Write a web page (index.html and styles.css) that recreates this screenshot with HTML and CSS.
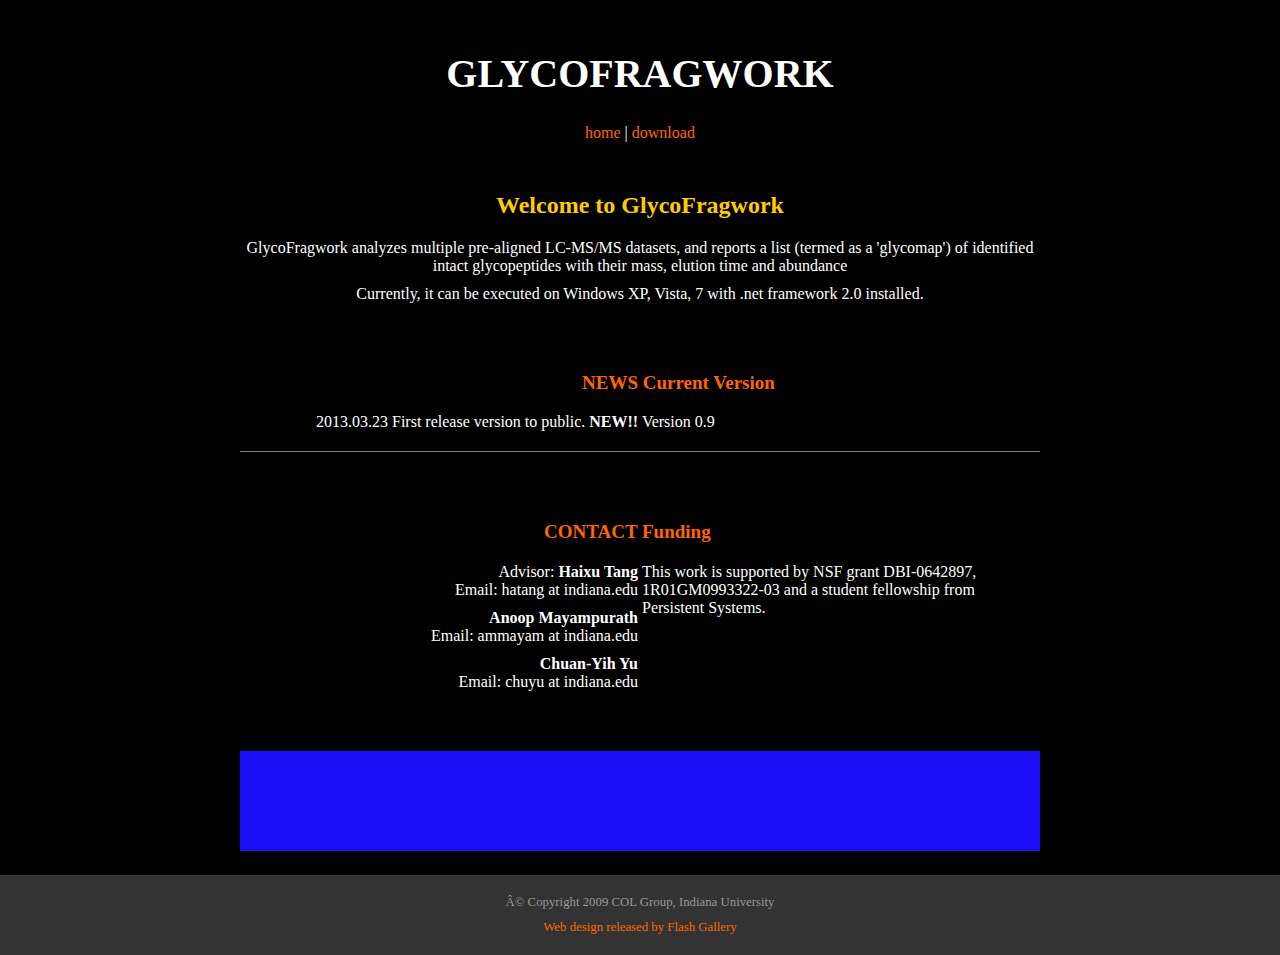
FILE: index.html
```html
<!DOCTYPE html>
<html>
<head>
<meta charset="utf-8">
<title>GlycoFragwork</title>
<link rel="stylesheet" href="styles.css">
</head>
<body>
<div class="wrap">
  <header class="header">
    <h1 class="logo">GLYCOFRAGWORK</h1>
    <nav class="nav"><a href="#">home</a> | <a href="#">download</a></nav>
  </header>

  <section class="welcome">
    <h2 class="welcome-title">Welcome to GlycoFragwork</h2>
    <p class="intro">GlycoFragwork analyzes multiple pre-aligned LC-MS/MS datasets, and reports a list (termed as a 'glycomap') of identified intact glycopeptides with their mass, elution time and abundance</p>
    <p class="intro intro-2">Currently, it can be executed on Windows XP, Vista, 7 with .net framework 2.0 installed.</p>
  </section>

  <section class="news">
    <h3 class="section-title news-title">NEWS Current Version</h3>
    <p class="news-line">2013.03.23 First release version to public. <b>NEW!!</b> Version 0.9</p>
  </section>

  <hr class="rule">

  <section class="contact">
    <h3 class="section-title contact-title">CONTACT Funding</h3>
    <div class="contact-row">
      <div class="people">
        <p class="person">Advisor: <b>Haixu Tang</b><br>Email: hatang at indiana.edu</p>
        <p class="person"><b>Anoop Mayampurath</b><br>Email: ammayam at indiana.edu</p>
        <p class="person"><b>Chuan-Yih Yu</b><br>Email: chuyu at indiana.edu</p>
      </div>
      <div class="funding">
        <p>This work is supported by NSF grant DBI-0642897, 1R01GM0993322-03 and a student fellowship from Persistent Systems.</p>
      </div>
    </div>
  </section>

  <div class="banner"></div>
</div>

<footer class="footer">
  <p class="copy">Â© Copyright 2009 COL Group, Indiana University</p>
  <p class="credit"><a href="#">Web design released by Flash Gallery</a></p>
</footer>
</body>
</html>
```

FILE: styles.css
```css
html, body {
  margin: 0;
  padding: 0;
  background: #000;
}
body {
  font-family: "Liberation Serif", "Times New Roman", serif;
  font-size: 16px;
  line-height: 18px;
  color: #fff;
}
a {
  color: #ff6600;
  text-decoration: none;
}
.wrap {
  width: 800px;
  margin: 0 auto;
}
.header {
  padding-top: 46px;
  text-align: center;
}
.logo {
  margin: 0;
  font-size: 40px;
  line-height: 56px;
  font-weight: bold;
}
.nav {
  margin-top: 22px;
  line-height: 18px;
}
.welcome {
  margin-top: 49px;
  text-align: center;
}
.welcome-title {
  margin: 0;
  font-size: 24px;
  line-height: 28px;
  color: #ffcc00;
}
.intro {
  margin: 20px 0 0;
}
.intro-2 {
  margin-top: 10px;
}
.section-title {
  margin: 0;
  font-size: 19px;
  line-height: 21px;
  color: #ff6600;
}
.news {
  margin-top: 69px;
}
.news-title {
  padding-left: 342px;
}
.news-line {
  margin: 20px 0 0;
  padding-left: 76px;
}
.rule {
  margin: 20px 0 0;
  border: 0;
  height: 1px;
  background: #808080;
}
.contact {
  margin-top: 69px;
}
.contact-title {
  padding-left: 304px;
}
.contact-row {
  display: flex;
  margin-top: 21px;
  padding-left: 158px;
  gap: 4px;
}
.people {
  width: 240px;
  text-align: right;
}
.person {
  margin: 0 0 10px;
}
.funding {
  width: 340px;
}
.funding p {
  margin: 0;
}
.banner {
  margin-top: 50px;
  height: 100px;
  background: #1b10f8;
}
.footer {
  margin-top: 24px;
  height: 80px;
  background: #333333;
  text-align: center;
  box-sizing: border-box;
  padding-top: 19px;
}
.copy {
  margin: 0;
  font-size: 12.8px;
  line-height: 16px;
  color: #999999;
}
.credit {
  margin: 9px 0 0;
  font-size: 12.8px;
  line-height: 16px;
}
```
